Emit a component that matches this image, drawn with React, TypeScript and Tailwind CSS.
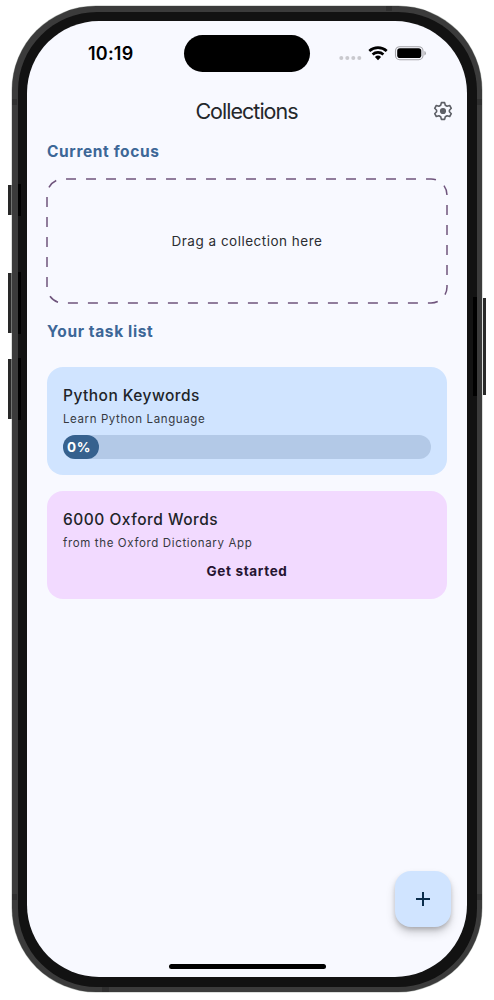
import { MdAdd } from "react-icons/md";

function StatusIcons() {
  return (
    <svg className="ml-[28px] mt-[10px] h-4 w-[90px]" viewBox="-1 0 90 16">
      <g fill="#c9c9ce">
        <circle cx="2.3" cy="13" r="2" />
        <circle cx="8.3" cy="13" r="2" />
        <circle cx="14.3" cy="13" r="2" />
        <circle cx="20.3" cy="13" r="2" />
      </g>
      <g fill="none" stroke="#000" strokeWidth="2.7">
        <path d="M30.3 5.9a13 13 0 0 1 17.4 0" />
        <path d="M33.6 9.4a8 8 0 0 1 10.8 0" />
      </g>
      <path d="M35.9 12a4.6 4.6 0 0 1 6.2 0L39 15.2z" />
      <rect x="56.5" y="1.7" width="27.5" height="13" rx="4.2" fill="none" stroke="#a3a3a8" strokeWidth="1.1" />
      <rect x="58.2" y="3.3" width="24.1" height="9.8" rx="2.8" />
      <path d="M85.4 6v4.5q1.5-.6 1.5-2.25T85.4 6z" fill="#a3a3a8" />
    </svg>
  );
}

function SettingsIcon() {
  return (
    <svg className="h-5 w-5" viewBox="0 0 20 20" fill="none" stroke="#5d5f66" strokeWidth="1.6" strokeLinejoin="round">
      <path d="M8.4 1.6h3.2l.7 2.6 1.8 1.05 2.6-.75 1.6 2.8-1.9 1.9v1.6l1.9 1.9-1.6 2.8-2.6-.75-1.8 1.05-.7 2.6H8.4l-.7-2.6-1.8-1.05-2.6.75-1.6-2.8 1.9-1.9V9.2L1.7 7.3l1.6-2.8 2.6.75L7.7 4.2z" />
      <circle cx="10" cy="10" r="3.1" fill="#5d5f66" stroke="none" />
    </svg>
  );
}

function AntennaBands() {
  return (
    <svg className="pointer-events-none absolute inset-0 h-[986px] w-[470px]" viewBox="0 0 470 986" fill="#303030">
      <path d="M0 93h5v6H0zM0 888h5v6H0zM465 93h5v6h-5zM465 888h5v6h-5zM374 0h6v5h-6zM90 981h7v5h-7z" />
    </svg>
  );
}

export default function App() {
  return (
    <div className="flex h-[1000px] w-[494px] overflow-hidden bg-white pl-2 pt-[6px] font-['Inter','Liberation_Sans',sans-serif]">
      <div className="flex w-1 flex-col pt-[179px]">
        <div className="h-[30px] w-[3.7px] bg-[#292929]" />
        <div className="mt-[58px] h-[60px] w-[3.7px] bg-[#292929]" />
        <div className="mt-[26px] h-[60px] w-[3.7px] bg-[#292929]" />
      </div>
      <div className="relative h-[986px] w-[470px] shrink-0 rounded-[84px] bg-[#3b3b3b] p-[5.5px] shadow-[0_0_0_0.5px_#b9bdb9]">
        <AntennaBands />
        <div className="flex h-[975px] w-[459px] rounded-[79px] bg-[#121212] pt-[9.5px]">
          <div className="flex w-[9.5px] shrink-0 flex-col pl-[0.5px] pt-[163px]">
            <div className="h-8 w-[3px] bg-black" />
            <div className="mt-14 h-[62px] w-[3px] bg-black" />
            <div className="mt-6 h-[62px] w-[3px] bg-black" />
          </div>
          <main className="flex h-[956px] w-[440px] shrink-0 flex-col rounded-[72px] bg-[#f8f9ff] text-[#191c20]">
            <header className="flex h-[66px] shrink-0 pt-[14px]">
              <div className="w-[157px] pl-[61px] pt-[6px] text-[18px] font-semibold leading-[26px] tracking-[0.2px] text-black">10:19</div>
              <div className="h-[37px] w-[126px] rounded-full bg-black" />
              <StatusIcons />
            </header>
            <div className="grid h-12 shrink-0 grid-cols-[1fr_auto_1fr] items-center pr-[14px]">
              <h1 className="col-start-2 pl-[13px] text-[21.5px] font-normal leading-7 tracking-[-0.98px] text-[#24272b]">Collections</h1>
              <button className="justify-self-end" aria-label="Settings">
                <SettingsIcon />
              </button>
            </div>
            <section className="px-5">
              <h2 className="-mb-0.5 mt-1 text-[15.5px] font-bold leading-[26px] tracking-[0.62px] text-[#3d6797]">Current focus</h2>
              <div className="relative mt-4 flex h-[124px] items-center justify-center">
                <svg className="absolute -left-px -top-px h-[126px] w-[402px]" viewBox="-1 -1 402 126">
                  <path d="M0 108V16A16 16 0 0 1 16 0H384A16 16 0 0 1 400 16V108A16 16 0 0 1 384 124H16A16 16 0 0 1 0 108Z" fill="none" stroke="#6f547c" strokeWidth="1.5" strokeDasharray="10 10" />
                </svg>
                <p className="text-[13.5px] leading-5 tracking-[0.5px] text-[#2b2d32]">Drag a collection here</p>
              </div>
              <h2 className="-mb-0.5 mt-4 text-[15.5px] font-bold leading-[26px] tracking-[0.62px] text-[#3d6797]">Your task list</h2>
            </section>
            <section className="mt-6 flex flex-col gap-4 px-5">
              <article className="h-[108px] rounded-2xl bg-[#d0e4ff] px-4 pt-4">
                <h3 className="-mb-0.5 text-[15.5px] font-medium leading-[26px] tracking-[0.46px] text-[#212429]">Python Keywords</h3>
                <p className="mt-1 text-[11.5px] leading-4 tracking-[0.6px] text-[#36393f]">Learn Python Language</p>
                <div className="mt-2 h-6 rounded-full bg-[#b3c9e7]">
                  <div className="flex h-6 w-9 items-center rounded-full bg-[#36618e] pl-1 text-[13.5px] font-bold tracking-[0.6px] text-white">0%</div>
                </div>
              </article>
              <article className="h-[108px] rounded-2xl bg-[#f2daff] px-4 pt-4">
                <h3 className="-mb-0.5 text-[15.5px] font-medium leading-[26px] tracking-[0.5px] text-[#212429]">6000 Oxford Words</h3>
                <p className="mt-1 text-[11.5px] leading-4 tracking-[0.64px] text-[#36393f]">from the Oxford Dictionary App</p>
                <p className="mt-[10px] text-center text-[13.5px] font-bold leading-5 tracking-[0.65px] text-[#251431]">Get started</p>
              </article>
            </section>
            <div className="mt-auto flex h-[106px] shrink-0 flex-col">
              <button className="mr-[16px] flex h-14 w-14 shrink-0 items-center justify-center self-end rounded-2xl bg-[#d0e4ff] text-[#0b2d4b] shadow-[0_3px_5px_-1px_rgba(0,0,0,0.22),0_6px_10px_rgba(0,0,0,0.16)]" aria-label="Add collection">
                <MdAdd className="h-6 w-6" />
              </button>
              <div className="mb-2 mt-auto h-[5px] w-[157px] self-center rounded-full bg-black" />
            </div>
          </main>
          <div className="w-[9.5px] shrink-0 pl-[5.5px] pt-[276px]">
            <div className="h-[99px] w-1 bg-black" />
          </div>
        </div>
      </div>
      <div className="w-1 shrink-0 pl-px pt-[292px]">
        <div className="h-[97px] w-[3px] bg-[#292929]" />
      </div>
    </div>
  );
}
